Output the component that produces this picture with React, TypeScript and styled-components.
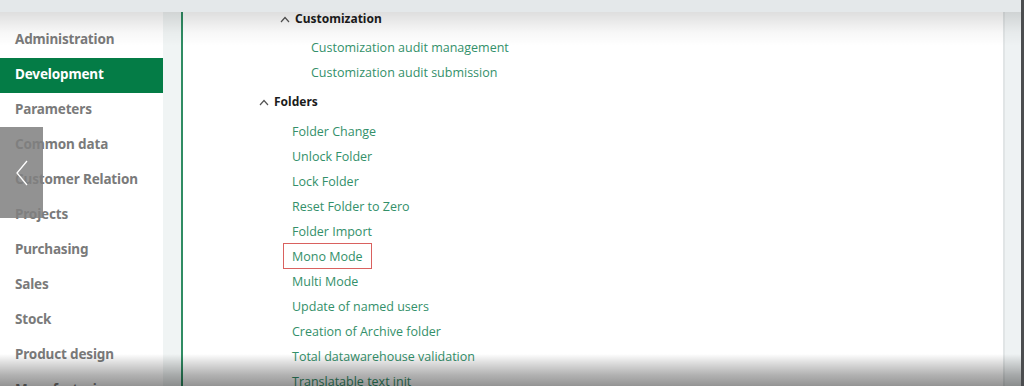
import React from "react";
import styled, { createGlobalStyle } from "styled-components";

const Global = createGlobalStyle`
  html, body { margin: 0; padding: 0; background: #ffffff; overflow: hidden; }
  body { width: 1024px; height: 386px; }
  #root { width: 1024px; height: 386px; }
`;

const Page = styled.div`
  position: relative;
  width: 1024px;
  height: 386px;
  display: flex;
  overflow: hidden;
  background: #fff;
`;

const Window = styled.div`
  flex: 1;
  display: flex;
  flex-direction: column;
  min-width: 0;
`;

const EdgeBar = styled.div`
  width: 3px;
  background: #4b4d4f;
`;

const TopBar = styled.div`
  height: 12px;
  flex: none;
  background: #e4e8ea;
`;

const Body = styled.div`
  flex: 1;
  display: flex;
  min-height: 0;
`;

const Sidebar = styled.nav`
  width: 163px;
  flex: none;
  padding-top: 11px;
  background: #fff;
  display: flex;
  flex-direction: column;
`;

const NavItem = styled.div<{ $active?: boolean }>`
  height: 35px;
  flex: none;
  display: flex;
  align-items: center;
  padding-left: 15px;
  padding-bottom: 3px;
  box-sizing: border-box;
  font-family: "Noto Sans", "Liberation Sans", sans-serif;
  font-weight: 700;
  font-size: 13.5px;
  letter-spacing: -0.15px;
  color: ${(p) => (p.$active ? "#ffffff" : "#7a7a7a")};
  background: ${(p) => (p.$active ? "#047c46" : "transparent")};
`;

const Gutter = styled.div`
  width: 18px;
  flex: none;
  background: #f0f4f4;
  border-right: 2px solid #2f8c63;
`;

const Content = styled.main`
  flex: 1;
  display: flex;
  flex-direction: column;
  min-width: 0;
`;

const Header = styled.div<{ $indent: number; $pt: number; $pb: number }>`
  display: flex;
  align-items: center;
  gap: 5px;
  padding-left: ${(p) => p.$indent}px;
  padding-top: ${(p) => p.$pt}px;
  padding-bottom: ${(p) => p.$pb}px;
  line-height: 14px;
  font-family: "Noto Sans", "Liberation Sans", sans-serif;
  font-weight: 700;
  font-size: 12px;
  color: #1c1c1c;
`;

const Caret = styled.svg`
  width: 10px;
  height: 7px;
  flex: none;
`;

const Items = styled.div<{ $indent: number; $mt?: number }>`
  display: flex;
  flex-direction: column;
  padding-left: ${(p) => p.$indent}px;
  margin-top: ${(p) => p.$mt ?? 0}px;
`;

const LinkRow = styled.div`
  height: 25px;
  display: flex;
  align-items: center;
`;

const Link = styled.span<{ $boxed?: boolean }>`
  font-family: "Open Sans", "Liberation Sans", sans-serif;
  font-size: 12.5px;
  color: #33906a;
  white-space: nowrap;
  ${(p) =>
    p.$boxed
      ? `
    margin-left: -9px;
    padding: 0 8px;
    height: 24px;
    display: inline-flex;
    align-items: center;
    border: 1px solid #d9615f;
  `
      : ""}
`;

const ScrollTrack = styled.div`
  width: 16px;
  flex: none;
  background: #eef2f3;
  border-left: 2px solid #e1e5e6;
`;

const TopShade = styled.div`
  position: absolute;
  left: 0;
  right: 3px;
  top: 12px;
  height: 34px;
  background: linear-gradient(to bottom, rgba(0,0,0,0.13), rgba(0,0,0,0.03) 60%, rgba(0,0,0,0));
  pointer-events: none;
`;

const BottomShade = styled.div`
  position: absolute;
  left: 0;
  right: 3px;
  bottom: 0;
  height: 32px;
  background: linear-gradient(to bottom, rgba(0,0,0,0), rgba(0,0,0,0.12) 25%, rgba(0,0,0,0.3) 65%, rgba(0,0,0,0.42));
  pointer-events: none;
`;

const PrevButton = styled.div`
  position: absolute;
  left: 0;
  top: 127px;
  width: 43px;
  height: 91px;
  background: rgba(128,128,128,0.86);
  display: flex;
  align-items: center;
  justify-content: center;
`;

const CaretIcon = () => (
  <Caret viewBox="0 0 10 7">
    <polyline points="1,6 5,1.5 9,6" fill="none" stroke="#555" strokeWidth="1.2" />
  </Caret>
);

const nav = [
  "Administration",
  "Development",
  "Parameters",
  "Common data",
  "Customer Relation",
  "Projects",
  "Purchasing",
  "Sales",
  "Stock",
  "Product design",
  "Manufacturing",
];

const folders = [
  "Folder Change",
  "Unlock Folder",
  "Lock Folder",
  "Reset Folder to Zero",
  "Folder Import",
  "Mono Mode",
  "Multi Mode",
  "Update of named users",
  "Creation of Archive folder",
  "Total datawarehouse validation",
  "Translatable text init",
];

export default function App() {
  return (
    <>
      <Global />
      <Page>
        <Window>
          <TopBar />
          <Body>
            <Sidebar>
              {nav.map((n) => (
                <NavItem key={n} $active={n === "Development"}>
                  {n}
                </NavItem>
              ))}
            </Sidebar>
            <Gutter />
            <Content>
              <Header $indent={97} $pt={0} $pb={0}>
                <CaretIcon />
                Customization
              </Header>
              <Items $indent={128} $mt={8.5}>
                <LinkRow><Link>Customization audit management</Link></LinkRow>
                <LinkRow><Link>Customization audit submission</Link></LinkRow>
              </Items>
              <Header $indent={76} $pt={10.5} $pb={9.5}>
                <CaretIcon />
                Folders
              </Header>
              <Items $indent={109}>
                {folders.map((f) => (
                  <LinkRow key={f}>
                    <Link $boxed={f === "Mono Mode"}>{f}</Link>
                  </LinkRow>
                ))}
              </Items>
            </Content>
            <ScrollTrack />
          </Body>
        </Window>
        <EdgeBar />
        <TopShade />
        <BottomShade />
        <PrevButton>
          <svg width="14" height="28" viewBox="0 0 14 28">
            <polyline points="12,2 2,14 12,26" fill="none" stroke="#ffffff" strokeWidth="1.3" />
          </svg>
        </PrevButton>
      </Page>
    </>
  );
}
